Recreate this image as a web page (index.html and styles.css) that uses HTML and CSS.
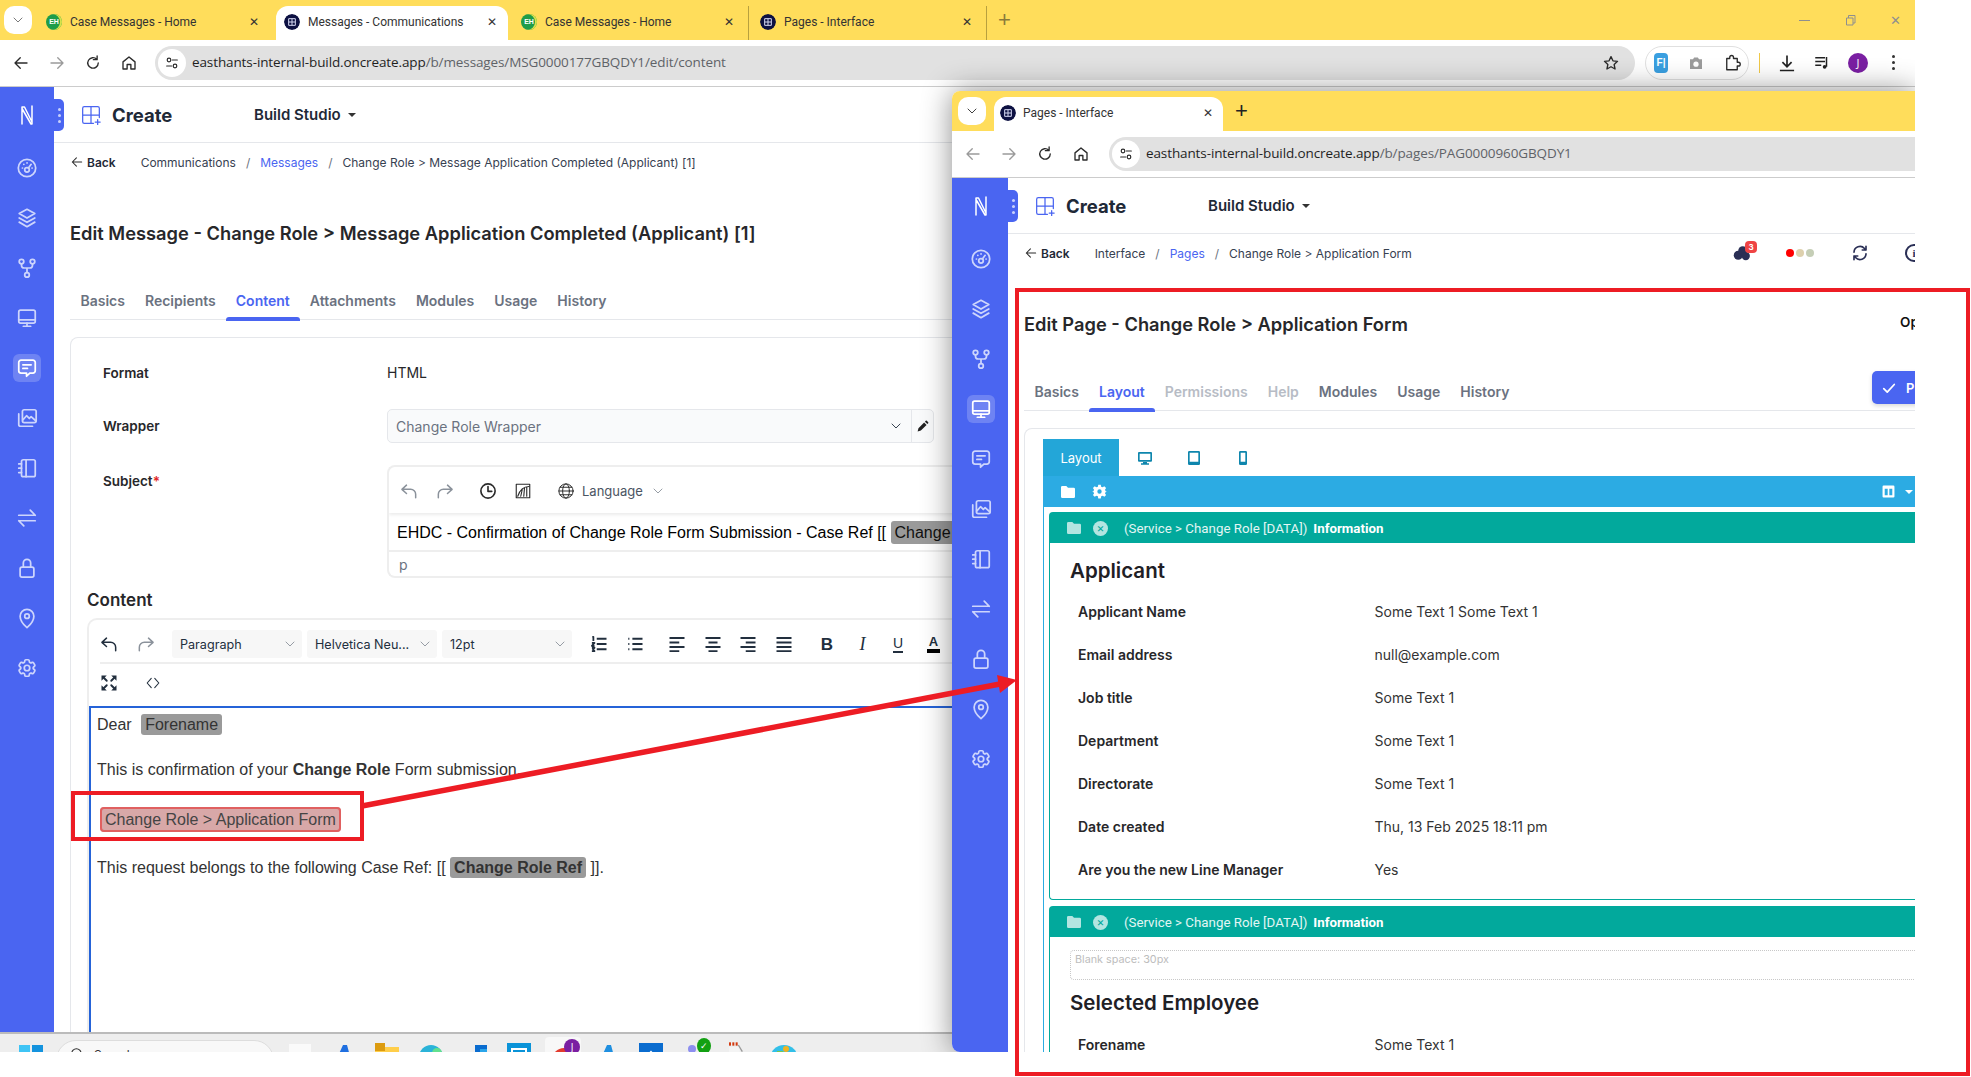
FILE: index.html
```html
<!DOCTYPE html>
<html lang="en">
<head>
<meta charset="utf-8">
<title>Messages - Communications</title>
<link rel="stylesheet" href="styles.css">
</head>
<body>
<svg class="defs" width="0" height="0" aria-hidden="true">
  <symbol id="i-gauge" viewBox="0 0 24 24"><circle cx="12" cy="12" r="9.500"/><circle cx="12" cy="14" r="2.500"/><path d="M13.500 12l3-4M7 12h.1M8.500 8h.1M12 6.500h.1M17.500 12h.1"/></symbol>
  <symbol id="i-layers" viewBox="0 0 24 24"><path d="M12 2.500l8.500 4.700L12 12 3.500 7.200z"/><path d="M3.500 12L12 16.700 20.500 12"/><path d="M3.500 16.500L12 21.500l8.500-5"/></symbol>
  <symbol id="i-fork" viewBox="0 0 24 24"><circle cx="6" cy="5" r="2.500"/><circle cx="18" cy="5" r="2.500"/><circle cx="12" cy="19.500" r="2.500"/><path d="M6 7.500V9a3 3 0 003 3h6a3 3 0 003-3V7.500M12 12v5"/></symbol>
  <symbol id="i-monitor" viewBox="0 0 24 24"><rect x="3" y="3.500" width="18" height="14" rx="2"/><path d="M3 14h18M12 17.500V21M8 21h8"/></symbol>
  <symbol id="i-chat" viewBox="0 0 24 24"><path d="M5.500 3.500h13a2.500 2.500 0 012.500 2.500v9a2.500 2.500 0 01-2.500 2.500H15L11.500 21v-3.500h-6A2.500 2.500 0 013 15V6a2.500 2.500 0 012.500-2.500z"/><path d="M7.500 8.500h9M7.500 12.500h5"/></symbol>
  <symbol id="i-images" viewBox="0 0 24 24"><rect x="7" y="3" width="15" height="14" rx="2"/><path d="M3 7.500V19a2 2 0 002 2h13M7.500 14l4-4.500 3 3 2-2 5 4.500"/></symbol>
  <symbol id="i-book" viewBox="0 0 24 24"><rect x="6" y="3" width="15" height="18.500" rx="2"/><path d="M11 3v18.500M3 7.500h3M3 12.200h3M3 17h3"/></symbol>
  <symbol id="i-swap" viewBox="0 0 24 24"><path d="M3 9h18M15.500 3.500L21 9M21 15H3M8.500 20.500L3 15"/></symbol>
  <symbol id="i-lock" viewBox="0 0 24 24"><rect x="4.500" y="11" width="15" height="11" rx="2"/><path d="M8 11V6.500a4 4 0 018 0V11"/></symbol>
  <symbol id="i-pin" viewBox="0 0 24 24"><path d="M12 22.500s7.500-6.500 7.500-12.500a7.500 7.500 0 10-15 0c0 6 7.500 12.500 7.500 12.500z"/><circle cx="12" cy="10" r="2.500"/></symbol>
  <symbol id="i-gear" viewBox="0 0 24 24"><path d="M9.594 3.940c.09-.542.56-.94 1.110-.94h2.593c.55 0 1.020.398 1.110.94l.213 1.281c.063.374.313.686.645.870.074.04.147.083.22.127.324.196.72.257 1.075.124l1.217-.456a1.125 1.125 0 011.370.49l1.296 2.247a1.125 1.125 0 01-.26 1.431l-1.003.827c-.293.24-.438.613-.431.992a6.759 6.759 0 010 .255c-.007.378.138.75.43.99l1.005.828c.424.35.534.954.26 1.430l-1.298 2.247a1.125 1.125 0 01-1.369.491l-1.217-.456c-.355-.133-.75-.072-1.076.124a6.570 6.570 0 01-.22.128c-.331.183-.581.495-.644.869l-.213 1.280c-.09.543-.56.941-1.110.941h-2.594c-.55 0-1.020-.398-1.110-.94l-.213-1.281c-.062-.374-.312-.686-.644-.870a6.520 6.520 0 01-.22-.127c-.325-.196-.72-.257-1.076-.124l-1.217.456a1.125 1.125 0 01-1.369-.49l-1.297-2.247a1.125 1.125 0 01.26-1.431l1.004-.827c.292-.24.437-.613.43-.992a6.932 6.932 0 010-.255c.007-.378-.138-.75-.43-.99l-1.004-.828a1.125 1.125 0 01-.26-1.430l1.297-2.247a1.125 1.125 0 011.370-.491l1.216.456c.356.133.751.072 1.076-.124.072-.044.146-.087.22-.128.332-.183.582-.495.644-.869l.214-1.281z"/><circle cx="12" cy="12" r="3"/></symbol>
  <symbol id="i-n" viewBox="0 0 24 24"><path d="M7 21V4h2.500L17 19V3M7 5.500L16 21h1v-2"/></symbol>
  <symbol id="i-create" viewBox="0 0 24 24"><path d="M15 22H4a2 2 0 01-2-2V4a2 2 0 012-2h16a2 2 0 012 2v11M12 2v20M2 12h20"/><path d="M20 17.500v6M17 20.500h6"/></symbol>
  <symbol id="i-back" viewBox="0 0 24 24"><path d="M20 12H4M11 5l-7 7 7 7"/></symbol>
  <symbol id="i-forward" viewBox="0 0 24 24"><path d="M4 12h16M13 5l7 7-7 7"/></symbol>
  <symbol id="i-reload" viewBox="0 0 24 24"><path d="M19 12a7 7 0 11-2-5M17.500 2.500V7.500H12.500"/></symbol>
  <symbol id="i-home" viewBox="0 0 24 24"><path d="M4 10.500L12 4l8 6.500V20h-5.500v-6h-5v6H4z"/></symbol>
  <symbol id="i-tune" viewBox="0 0 24 24"><circle cx="7.500" cy="7.500" r="2.700"/><path d="M12.500 7.500H20M4 16.500h7.500"/><circle cx="16.500" cy="16.500" r="2.700"/></symbol>
  <symbol id="i-star" viewBox="0 0 24 24"><path d="M12 3.500l2.600 5.600 6.100.7-4.500 4.200 1.200 6-5.400-3-5.400 3 1.200-6-4.500-4.200 6.100-.7z"/></symbol>
  <symbol id="i-puzzle" viewBox="0 0 24 24"><path d="M5 6h4V4.500a2.500 2.500 0 015 0V6h5v5h1.500a2.500 2.500 0 010 5H19v5H5z"/></symbol>
  <symbol id="i-undo" viewBox="0 0 24 24"><path d="M9 5L3.500 10 9 15M4 10h10a6 6 0 016 6v4"/></symbol>
  <symbol id="i-redo" viewBox="0 0 24 24"><path d="M15 5l5.500 5L15 15M20 10H10a6 6 0 00-6 6v4"/></symbol>
  <symbol id="i-chev" viewBox="0 0 24 24"><path d="M4 8l8 8 8-8"/></symbol>
  <symbol id="i-ol" viewBox="0 0 24 24"><path d="M9 5h13M9 12h13M9 19h13M3 3l1.500-.5V8M2.500 10.500h3.500l-3.500 4h3.500M2.500 17h3.500l-2 2 2 2.500h-3.500"/></symbol>
  <symbol id="i-ul" viewBox="0 0 24 24"><path d="M8.500 5H22M8.500 12H22M8.500 19H22M3 5h1.500M3 12h1.500M3 19h1.500"/></symbol>
  <symbol id="i-al" viewBox="0 0 24 24"><path d="M2 4h20M2 10h13M2 16h20M2 21.500h13"/></symbol>
  <symbol id="i-ac" viewBox="0 0 24 24"><path d="M2 4h20M6 10h12M2 16h20M6 21.500h12"/></symbol>
  <symbol id="i-ar" viewBox="0 0 24 24"><path d="M2 4h20M9 10h13M2 16h20M9 21.500h13"/></symbol>
  <symbol id="i-aj" viewBox="0 0 24 24"><path d="M2 4h20M2 10h20M2 16h20M2 21.500h20"/></symbol>
  <symbol id="i-expand" viewBox="0 0 24 24"><path d="M2 2h7L2 9zM22 2h-7l7 7zM2 22h7l-7-7zM22 22h-7l7-7z"/><path d="M5 5l4 4M19 5l-4 4M5 19l4-4M19 19l-4-4" stroke="#222f3e" stroke-width="2.500"/></symbol>
  <symbol id="i-code" viewBox="0 0 24 24"><path d="M9 4l-7 8 7 8M15 4l7 8-7 8"/></symbol>
  <symbol id="i-folder" viewBox="0 0 24 24"><path d="M1.500 5a2 2 0 012-2h6l2.500 2.500h8.500a2 2 0 012 2V19a2 2 0 01-2 2h-17a2 2 0 01-2-2z"/></symbol>
  <symbol id="i-oc" viewBox="0 0 24 24"><circle cx="12" cy="12" r="12" fill="#0d1142"/><path d="M7 7h10v10H7zM12 7v10M7 12h10" fill="none" stroke="#d5d8f2" stroke-width="1.500"/></symbol>
  <symbol id="i-search" viewBox="0 0 24 24"><circle cx="11" cy="11" r="8"/><path d="M17 17l5 5"/></symbol>
</svg>

<div class="stage">
  <div class="screen">

    <!-- back browser window -->
    <section class="window win-back">
      <div class="tabstrip">
        <span class="tab-down"><svg class="ic ic-12 st-grey"><use href="#i-chev"/></svg></span>
        <div class="tab tab-one"><span class="fav fav-eh">EH</span><span class="tab-t">Case Messages - Home</span><span class="tab-x">✕</span></div>
        <div class="tab tab-on"><svg class="fav"><use href="#i-oc"/></svg><span class="tab-t">Messages - Communications</span><span class="tab-x">✕</span></div>
        <div class="tab tab-three tab-sep"><span class="fav fav-eh">EH</span><span class="tab-t">Case Messages - Home</span><span class="tab-x">✕</span></div>
        <div class="tab tab-four tab-sep"><svg class="fav"><use href="#i-oc"/></svg><span class="tab-t">Pages - Interface</span><span class="tab-x">✕</span></div>
        <span class="tab-plus tab-plus-dim">+</span>
        <div class="winctl"><span class="wc-min"></span><svg class="wc-max" viewBox="0 0 12 12"><path d="M2.500 4h6.500v7H2.500zM4.500 4V1.500H11V9H9"/></svg><span class="wc-x">✕</span></div>
      </div>
      <div class="toolbar">
        <svg class="ic nav st-ink"><use href="#i-back"/></svg>
        <svg class="ic nav st-dim"><use href="#i-forward"/></svg>
        <svg class="ic nav st-ink"><use href="#i-reload"/></svg>
        <svg class="ic nav st-ink"><use href="#i-home"/></svg>
        <div class="addr">
          <span class="addr-site"><svg class="ic ic-16 st-ink"><use href="#i-tune"/></svg></span>
          <span class="url">easthants-internal-build.oncreate.app<span class="url-path">/b/messages/MSG0000177GBQDY1/edit/content</span></span>
          <svg class="ic ic-18 st-ink addr-star"><use href="#i-star"/></svg>
        </div>
        <div class="ext-pill">
          <span class="ext-f">F|</span>
          <svg class="ext-cam" viewBox="0 0 24 24"><path d="M4 7h4l1.500-2.500h5L16 7h4v13H4z"/><circle cx="12" cy="13.500" r="3.500" class="ext-cam-eye"/></svg>
          <svg class="ic ic-18 st-ink"><use href="#i-puzzle"/></svg>
        </div>
        <span class="tb-sep"></span>
        <svg class="tb-icon" viewBox="0 0 24 24"><path d="M12 3v13M6.500 11l5.500 5.500 5.500-5.500M3.500 21h17"/></svg>
        <svg class="tb-icon tb-media" viewBox="0 0 24 24"><path d="M3 5h13M3 10h13M3 15h8M18 4v13"/><circle cx="15.500" cy="17" r="2.500" class="tb-fill"/></svg>
        <span class="avatar">J</span>
        <span class="kebab"><i></i><i></i><i></i></span>
      </div>
      <div class="app">
        <aside class="rail">
          <div class="rail-logo"><svg class="ic ic-24 st-white st-thin"><use href="#i-n"/></svg></div>
          <span class="rail-grip"><i></i><i></i><i></i></span>
          <span class="rail-item"><svg class="ic st-soft"><use href="#i-gauge"/></svg></span>
          <span class="rail-item"><svg class="ic st-soft"><use href="#i-layers"/></svg></span>
          <span class="rail-item"><svg class="ic st-soft"><use href="#i-fork"/></svg></span>
          <span class="rail-item"><svg class="ic st-soft"><use href="#i-monitor"/></svg></span>
          <span class="rail-item rail-on"><svg class="ic st-white"><use href="#i-chat"/></svg></span>
          <span class="rail-item"><svg class="ic st-soft"><use href="#i-images"/></svg></span>
          <span class="rail-item"><svg class="ic st-soft"><use href="#i-book"/></svg></span>
          <span class="rail-item"><svg class="ic st-soft"><use href="#i-swap"/></svg></span>
          <span class="rail-item"><svg class="ic st-soft"><use href="#i-lock"/></svg></span>
          <span class="rail-item"><svg class="ic st-soft"><use href="#i-pin"/></svg></span>
          <span class="rail-item"><svg class="ic st-soft"><use href="#i-gear"/></svg></span>
        </aside>
        <main class="main">
          <header class="appbar">
            <div class="brand"><svg class="ic brand-ic st-blue"><use href="#i-create"/></svg><span class="brand-t">Create</span></div>
            <span class="studio">Build Studio</span><span class="caret"></span>
          </header>
          <nav class="crumbs">
            <svg class="ic ic-14 st-ink crumb-arrow"><use href="#i-back"/></svg><span class="back">Back</span>
            <span class="crumb crumb-first">Communications</span><span class="slash">/</span>
            <span class="crumb crumb-link">Messages</span><span class="slash">/</span>
            <span class="crumb">Change Role &gt; Message Application Completed (Applicant) [1]</span>
          </nav>
          <h1 class="page-title">Edit Message - Change Role &gt; Message Application Completed (Applicant) [1]</h1>
          <div class="tabs">
            <span class="tabx">Basics</span><span class="tabx">Recipients</span><span class="tabx tabx-on">Content</span><span class="tabx">Attachments</span><span class="tabx">Modules</span><span class="tabx">Usage</span><span class="tabx">History</span>
          </div>
          <div class="card card-form">
            <div class="form-grid">
              <div class="lbl">Format</div><div class="val">HTML</div>
              <div class="lbl">Wrapper</div>
              <div class="select">
                <span class="select-t">Change Role Wrapper</span>
                <svg class="ic ic-12 st-ink2"><use href="#i-chev"/></svg>
                <span class="select-edit"><svg class="pen" viewBox="0 0 24 24"><path d="M3 21l1.500-6L15 4.500l4.500 4.500L9 19.500zM16.500 3l1.500-1.500a1.500 1.500 0 012 0L22.500 4a1.500 1.500 0 010 2L21 7.500z"/></svg></span>
              </div>
              <div class="lbl lbl-top">Subject<span class="req">*</span></div>
              <div class="rte-small">
                <div class="rs-bar">
                  <svg class="ic ic-20 st-mute"><use href="#i-undo"/></svg>
                  <svg class="ic ic-20 st-mute"><use href="#i-redo"/></svg>
                  <svg class="ic ic-20 st-ink rs-clock" viewBox="0 0 24 24"><circle cx="12" cy="12" r="9.500"/><path d="M12 6v6.500h5"/></svg>
                  <svg class="ic ic-20 st-ink rs-chart" viewBox="0 0 24 24"><rect x="3" y="3" width="18" height="18"/><path d="M5 19C8 10 13 6 20 6M9 19l2-9M13 19l1-11M17 19V7"/></svg>
                  <svg class="ic ic-20 st-ink rs-globe" viewBox="0 0 24 24"><circle cx="12" cy="12" r="9.500"/><ellipse cx="12" cy="12" rx="4.500" ry="9.500"/><path d="M2.500 12h19M4 7h16M4 17h16"/></svg>
                  <span class="rs-lang">Language</span>
                  <svg class="ic ic-12 st-mute"><use href="#i-chev"/></svg>
                </div>
                <div class="rs-text">EHDC - Confirmation of Change Role Form Submission - Case Ref [[ <span class="chip chip-sub">Change Role Ref</span> ]]</div>
                <div class="rs-path">p</div>
              </div>
            </div>
            <h2 class="sec-title">Content</h2>
            <div class="rte">
              <div class="rte-bar">
                <button class="tbtn tbtn-undo"><svg class="ic ic-20 st-ink2"><use href="#i-undo"/></svg></button>
                <button class="tbtn"><svg class="ic ic-20 st-mute"><use href="#i-redo"/></svg></button>
                <span class="sel sel-first">Paragraph<svg class="ic ic-12 st-mute"><use href="#i-chev"/></svg></span>
                <span class="sel">Helvetica Neu...<svg class="ic ic-12 st-mute"><use href="#i-chev"/></svg></span>
                <span class="sel">12pt<svg class="ic ic-12 st-mute"><use href="#i-chev"/></svg></span>
                <button class="tbtn tg-a"><svg class="ic ic-18 st-ink2 st-bold"><use href="#i-ol"/></svg></button>
                <button class="tbtn"><svg class="ic ic-18 st-ink2 st-bold"><use href="#i-ul"/></svg></button>
                <button class="tbtn tg-b"><svg class="ic ic-18 st-ink2 st-bold"><use href="#i-al"/></svg></button>
                <button class="tbtn"><svg class="ic ic-18 st-ink2 st-bold"><use href="#i-ac"/></svg></button>
                <button class="tbtn"><svg class="ic ic-18 st-ink2 st-bold"><use href="#i-ar"/></svg></button>
                <button class="tbtn"><svg class="ic ic-18 st-ink2 st-bold"><use href="#i-aj"/></svg></button>
                <button class="tbtn tbtn-t tg-c"><b>B</b></button>
                <button class="tbtn tbtn-t"><i class="ital">I</i></button>
                <button class="tbtn tbtn-t"><span class="undl">U</span></button>
                <button class="tbtn tbtn-t"><span class="colr">A</span></button>
              </div>
              <div class="rte-bar2">
                <button class="tbtn tbtn-undo"><svg class="ic ic-18 fl-ink"><use href="#i-expand"/></svg></button>
                <button class="tbtn tbtn-code"><svg class="ic ic-14 st-ink2"><use href="#i-code"/></svg></button>
              </div>
              <div class="rte-body">
                <p>Dear <span class="chip chip-first">Forename</span></p>
                <p>This is confirmation of your <b>Change Role</b> Form submission.</p>
                <p class="p-form"><span class="chip chip-form">Change Role &gt; Application Form</span></p>
                <p>This request belongs to the following Case Ref: [[ <span class="chip"><b>Change Role Ref</b></span> ]].</p>
              </div>
            </div>
          </div>
        </main>
      </div>
    </section>

    <!-- Windows taskbar -->
    <footer class="taskbar">
      <svg class="tk tk-win" viewBox="0 0 24 24"><rect x="0" y="0" width="11" height="24" fill="#3fc4f5"/><rect x="13" y="0" width="11" height="24" fill="#1493de"/></svg>
      <div class="tk-search"><svg class="ic ic-14 st-ink"><use href="#i-search"/></svg><span class="tk-search-t">Search</span></div>
      <span class="tk-view"></span>
      <svg class="tk" viewBox="0 0 24 24"><path d="M2 24L12 2l4 0 6 22z" fill="#1f6fe0"/><circle cx="20" cy="20" r="6" fill="#b06ee8"/></svg>
      <svg class="tk" viewBox="0 0 24 24"><rect x="0" y="4" width="24" height="20" fill="#ffce4a"/><rect x="0" y="0" width="10" height="8" fill="#dc9b10"/></svg>
      <svg class="tk" viewBox="0 0 24 24"><circle cx="12" cy="14" r="12" fill="#2bb3d8"/><circle cx="18" cy="10" r="5" fill="#63e08f"/></svg>
      <svg class="tk" viewBox="0 0 24 24"><rect x="12" y="2" width="12" height="22" fill="#0a6ccf"/><rect x="0" y="12" width="14" height="12" fill="#0a4fa8"/><rect x="17" y="6" width="7" height="18" fill="#2aa5ea"/></svg>
      <svg class="tk tk-print" viewBox="0 0 24 24"><rect x="0" y="0" width="24" height="24" fill="#0a93d8"/><rect x="5" y="6" width="14" height="7" fill="none" stroke="#fff" stroke-width="2"/><rect x="3" y="13" width="18" height="4" fill="#fff"/></svg>
      <span class="tk-active"><svg class="tk-chrome" viewBox="0 0 24 24"><circle cx="12" cy="16" r="12" fill="#e33b2e"/><circle cx="12" cy="16" r="5" fill="#4a8ef0"/></svg><span class="tk-j">J</span></span>
      <svg class="tk" viewBox="0 0 24 24"><path d="M2 24L12 2l4 0 6 22z" fill="#1f8fe0"/><circle cx="20" cy="20" r="6" fill="#b06ee8"/></svg>
      <svg class="tk tk-vs" viewBox="0 0 24 24"><rect x="0" y="0" width="24" height="24" fill="#0a6ccf"/><path d="M9 12l3-3 3 3-3 3z" fill="none" stroke="#fff" stroke-width="2"/></svg>
      <span class="tk-teams"><i class="tk-dot"></i><i class="tk-ok">✓</i></span>
      <svg class="tk tk-snip" viewBox="0 0 24 24"><rect x="0" y="2" width="3" height="5" fill="#d33a10"/><rect x="5" y="2" width="3" height="5" fill="#d33a10"/><rect x="10" y="2" width="3" height="5" fill="#d33a10"/><rect x="0" y="9" width="16" height="15" fill="#f4f4f4"/><path d="M14 6l6 10" stroke="#999" stroke-width="2"/></svg>
      <svg class="tk tk-last" viewBox="0 0 24 24"><circle cx="12" cy="16" r="14" fill="#32bfe8"/><circle cx="14" cy="6" r="3" fill="#f0b320"/><rect x="5" y="8" width="6" height="14" fill="#78c850"/></svg>
    </footer>

    <!-- front browser window -->
    <section class="window win-front">
      <div class="tabstrip tabstrip-front">
        <span class="tab-down"><svg class="ic ic-12 st-ink"><use href="#i-chev"/></svg></span>
        <div class="tab tab-w2 tab-on"><svg class="fav"><use href="#i-oc"/></svg><span class="tab-t">Pages - Interface</span><span class="tab-x">✕</span></div>
        <span class="tab-plus">+</span>
      </div>
      <div class="toolbar">
        <svg class="ic nav st-dim"><use href="#i-back"/></svg>
        <svg class="ic nav st-dim"><use href="#i-forward"/></svg>
        <svg class="ic nav st-ink"><use href="#i-reload"/></svg>
        <svg class="ic nav st-ink"><use href="#i-home"/></svg>
        <div class="addr addr-front">
          <span class="addr-site"><svg class="ic ic-16 st-ink"><use href="#i-tune"/></svg></span>
          <span class="url">easthants-internal-build.oncreate.app<span class="url-path">/b/pages/PAG0000960GBQDY1</span></span>
        </div>
      </div>
      <div class="app">
        <aside class="rail rail-wide">
          <div class="rail-logo"><svg class="ic ic-24 st-white st-thin"><use href="#i-n"/></svg></div>
          <span class="rail-grip"><i></i><i></i><i></i></span>
          <span class="rail-item"><svg class="ic st-soft"><use href="#i-gauge"/></svg></span>
          <span class="rail-item"><svg class="ic st-soft"><use href="#i-layers"/></svg></span>
          <span class="rail-item"><svg class="ic st-soft"><use href="#i-fork"/></svg></span>
          <span class="rail-item rail-on"><svg class="ic st-white"><use href="#i-monitor"/></svg></span>
          <span class="rail-item"><svg class="ic st-soft"><use href="#i-chat"/></svg></span>
          <span class="rail-item"><svg class="ic st-soft"><use href="#i-images"/></svg></span>
          <span class="rail-item"><svg class="ic st-soft"><use href="#i-book"/></svg></span>
          <span class="rail-item"><svg class="ic st-soft"><use href="#i-swap"/></svg></span>
          <span class="rail-item"><svg class="ic st-soft"><use href="#i-lock"/></svg></span>
          <span class="rail-item"><svg class="ic st-soft"><use href="#i-pin"/></svg></span>
          <span class="rail-item"><svg class="ic st-soft"><use href="#i-gear"/></svg></span>
        </aside>
        <main class="main">
          <header class="appbar">
            <div class="brand"><svg class="ic brand-ic st-blue"><use href="#i-create"/></svg><span class="brand-t">Create</span></div>
            <span class="studio">Build Studio</span><span class="caret"></span>
          </header>
          <nav class="crumbs">
            <svg class="ic ic-14 st-ink crumb-arrow"><use href="#i-back"/></svg><span class="back">Back</span>
            <span class="crumb crumb-first">Interface</span><span class="slash">/</span>
            <span class="crumb crumb-link">Pages</span><span class="slash">/</span>
            <span class="crumb">Change Role &gt; Application Form</span>
            <div class="crumb-tools">
              <span class="cloud"><svg class="cloud-ic" viewBox="0 0 24 24"><circle cx="7" cy="15" r="6"/><circle cx="13" cy="9" r="6"/><circle cx="17" cy="16" r="5.500"/></svg><span class="cloud-n">3</span></span>
              <span class="dots"><i class="d-r"></i><i class="d-y"></i><i class="d-g"></i></span>
              <svg class="ic ic-18 st-navy" viewBox="0 0 24 24"><path d="M4 11a8 8 0 0114-5l2 2M20 3v5h-5M20 13a8 8 0 01-14 5l-2-2M4 21v-5h5"/></svg>
              <span class="info">i</span>
            </div>
          </nav>
          <div class="title-row">
            <h1 class="page-title">Edit Page - Change Role &gt; Application Form</h1>
            <span class="open-t">Open</span>
          </div>
          <div class="tabs tabs-action">
            <span class="tabx">Basics</span><span class="tabx tabx-on">Layout</span><span class="tabx tabx-off">Permissions</span><span class="tabx tabx-off">Help</span><span class="tabx">Modules</span><span class="tabx">Usage</span><span class="tabx">History</span>
            <span class="publish"><svg class="ic ic-14 st-white2" viewBox="0 0 24 24"><path d="M3 13l6 6L21 6"/></svg>Publish</span>
          </div>
          <div class="card card-layout">
            <div class="lay-tabs">
              <span class="lay-on">Layout</span>
              <svg class="lay-ic" viewBox="0 0 24 24"><path d="M3 3h18a1.500 1.500 0 011.500 1.500V16a1.500 1.500 0 01-1.500 1.500H3A1.500 1.500 0 011.500 16V4.500A1.500 1.500 0 013 3zM4 5.500v9.500h16V5.500zM9 18h6v2h3v2H6v-2h3z" fill-rule="evenodd"/></svg>
              <svg class="lay-ic" viewBox="0 0 24 24"><path d="M5 1.500h14A2 2 0 0121 3.500v17a2 2 0 01-2 2H5a2 2 0 01-2-2v-17a2 2 0 012-2zM5.500 4v13.500h13V4z" fill-rule="evenodd"/></svg>
              <svg class="lay-ic" viewBox="0 0 24 24"><path d="M8 1.500h8A2 2 0 0118 3.500v17a2 2 0 01-2 2H8a2 2 0 01-2-2v-17a2 2 0 012-2zM8.500 4v13.500h7V4z" fill-rule="evenodd"/></svg>
            </div>
            <div class="lay-bar">
              <svg class="ic ic-16 fl-white"><use href="#i-folder"/></svg>
              <svg class="ic ic-16 fl-white lay-gear" viewBox="0 0 24 24"><path d="M10 1h4l.6 3.200 2.400 1 2.700-1.800 2.800 2.800L20.800 9l1 2.400L25 12l-3.200.6-1 2.400 1.800 2.700-2.800 2.800-2.700-1.800-2.400 1L14 23h-4l-.6-3.300-2.400-1-2.700 1.800-2.800-2.800L3.300 15l-1-2.400L-1 12l3.300-.6 1-2.400-1.800-2.700 2.800-2.800L7 5.300l2.400-1zM12 8.500a3.500 3.500 0 100 7 3.500 3.500 0 000-7z" fill-rule="evenodd"/></svg>
              <span class="lay-right"><svg class="lay-cols" viewBox="0 0 24 24"><path d="M3 1h18a2 2 0 012 2v18a2 2 0 01-2 2H3a2 2 0 01-2-2V3a2 2 0 012-2zM5 7v12h5.500V7zM13.500 7v12H19V7z" fill-rule="evenodd"/></svg><span class="caret caret-white"></span></span>
            </div>
            <div class="lay-body">
              <section class="panel">
                <div class="panel-head"><svg class="ic ic-16 fl-mint"><use href="#i-folder"/></svg><span class="panel-x">×</span><span class="panel-src">(Service &gt; Change Role [DATA])</span><b class="panel-name">Information</b></div>
                <div class="panel-body">
                  <h3 class="panel-h">Applicant</h3>
                  <dl class="rows">
                    <dt>Applicant Name</dt><dd>Some Text 1 Some Text 1</dd>
                    <dt>Email address</dt><dd>null@example.com</dd>
                    <dt>Job title</dt><dd>Some Text 1</dd>
                    <dt>Department</dt><dd>Some Text 1</dd>
                    <dt>Directorate</dt><dd>Some Text 1</dd>
                    <dt>Date created</dt><dd>Thu, 13 Feb 2025 18:11 pm</dd>
                    <dt>Are you the new Line Manager</dt><dd>Yes</dd>
                  </dl>
                </div>
              </section>
              <section class="panel">
                <div class="panel-head"><svg class="ic ic-16 fl-mint"><use href="#i-folder"/></svg><span class="panel-x">×</span><span class="panel-src">(Service &gt; Change Role [DATA])</span><b class="panel-name">Information</b></div>
                <div class="panel-body">
                  <div class="blank">Blank space: 30px</div>
                  <h3 class="panel-h panel-h2">Selected Employee</h3>
                  <dl class="rows">
                    <dt>Forename</dt><dd>Some Text 1</dd>
                  </dl>
                </div>
              </section>
            </div>
          </div>
        </main>
      </div>
    </section>
  </div>

  <!-- annotations drawn over the screenshot -->
  <div class="note-box note-small"></div>
  <div class="note-box note-large"></div>
  <svg class="note-arrow" viewBox="0 0 1971 1077" aria-hidden="true">
    <path class="note-line" d="M362 806L1000 684"/>
    <path class="note-head" d="M997 675L1017 680 1000 693z"/>
  </svg>
</div>
</body>
</html>
```
FILE: styles.css
```css
* { box-sizing: border-box; }
html, body { margin: 0; padding: 0; background: #fff; }
body { font-family: Inter, "Liberation Sans", sans-serif; color: #1f2937; }
.defs { position: absolute; }
h1, h2, h3, p, dl, dd { margin: 0; }
button { border: 0; background: none; padding: 0; font: inherit; color: inherit; }

/* stage and windows: free canvas */
.stage { position: relative; width: 1971px; height: 1077px; overflow: hidden; background: #fff; }
.screen { position: relative; width: 1915px; height: 1052px; overflow: hidden; background: #fff; }
.window { position: absolute; overflow: hidden; background: #fff; display: flex; flex-direction: column; }
.win-back { left: 0; top: 0; width: 1915px; height: 1032px; }
.win-front { left: 952px; top: 91px; width: 963px; height: 961px; border-top-left-radius: 8px; border-bottom-left-radius: 8px; box-shadow: 0 0 30px rgba(0, 0, 0, .45); z-index: 2; }

/* icons */
.ic { display: block; flex: none; width: 24px; height: 24px; fill: none; stroke-width: 1.8; stroke-linecap: round; stroke-linejoin: round; }
.ic-12 { width: 12px; height: 12px; }
.ic-14 { width: 14px; height: 14px; }
.ic-16 { width: 16px; height: 16px; }
.ic-18 { width: 18px; height: 18px; }
.ic-20 { width: 20px; height: 20px; }
.ic-24 { width: 24px; height: 24px; }
.st-ink { stroke: #2b2b2b; }
.st-ink2 { stroke: #222f3e; }
.st-bold { stroke-width: 2.400; stroke-linecap: butt; }
.st-dim { stroke: #9a9a9a; }
.st-grey { stroke: #6b6b6b; }
.st-mute { stroke: #8b929b; }
.st-white { stroke: #fff; }
.st-thin { stroke-width: 1.500; }
.st-white2 { stroke: #fff; stroke-width: 3; }
.st-soft { stroke: #cdd5fc; }
.st-blue { stroke: #4a65f1; }
.st-navy { stroke: #2a2f55; stroke-width: 2.200; }
.fl-ink { fill: #222f3e; stroke: none; }
.fl-white { fill: #fff; stroke: none; }
.fl-mint { fill: #b3e5e1; stroke: none; }

/* browser tab strip */
.tabstrip { height: 40px; flex: none; background: #ffdd5b; display: flex; align-items: flex-end; position: relative; padding-left: 4px; font-family: Roboto, "Liberation Sans", sans-serif; font-size: 12px; color: #333; }
.tabstrip-front { padding-left: 6px; }
.tab-down { width: 28px; height: 28px; margin-bottom: 6px; background: #fff; border-radius: 10px; display: flex; align-items: center; justify-content: center; flex: none; }
.tab { height: 34px; display: flex; align-items: center; flex: none; padding: 0 8px 3px 8px; position: relative; }
.tab-one { width: 238px; margin-left: 6px; padding-right: 14px; }
.tab-on { width: 232px; background: #fff; border-radius: 12px 12px 0 0; }
.tab-three { width: 241px; padding-left: 13px; padding-right: 11px; }
.tab-four { width: 238px; padding-left: 11px; padding-right: 11px; }
.tab-w2 { width: 229px; margin-left: 8px; padding-left: 6px; padding-right: 7px; }
.tab-sep { border-right: 1px solid #b8a03e; }
.fav { flex: none; display: block; width: 16px; height: 16px; border-radius: 50%; margin-right: 8px; }
.tab-w2 .fav { margin-right: 7px; }
.fav-eh { background: #1e9c4a; color: #fff; font: bold 7px/16px "Liberation Sans", sans-serif; text-align: center; box-shadow: inset -2px 0 #d8e24a; }
.tab-t { flex: 1; min-width: 0; white-space: nowrap; overflow: hidden; }
.tab-x { flex: none; font-size: 12px; color: #333; width: 16px; text-align: center; }
.tab-plus { font: 400 22px/34px "Liberation Sans", sans-serif; color: #222; margin-left: 12px; padding-bottom: 3px; height: 37px; }
.tab-plus-dim { color: #8a7a3a; margin-left: 11px; }
.winctl { position: absolute; right: 14px; top: 0; height: 40px; display: flex; align-items: center; gap: 34px; color: #8f8f8f; }
.wc-min { width: 11px; height: 1px; background: #8f8f8f; }
.wc-max { width: 12px; height: 12px; fill: none; stroke: #8f8f8f; }
.wc-x { font-size: 13px; }

/* browser toolbar */
.toolbar { height: 47px; flex: none; background: #fff; border-bottom: 1px solid #ccc; display: flex; align-items: center; padding: 0 10px 1px 12px; }
.nav { width: 18px; height: 18px; margin-right: 18px; }
.addr { flex: none; width: 1480px; height: 34px; border-radius: 17px; background: #e1e1e1; display: flex; align-items: center; padding-left: 3px; position: relative; }
.win-back .addr { margin-left: -1px; }
.addr-site { width: 28px; height: 28px; border-radius: 50%; background: #fff; display: flex; align-items: center; justify-content: center; flex: none; }
.url { margin: 1px 0 0 6px; font: 13.500px/1 "Open Sans", "Liberation Sans", sans-serif; color: #1f1f1f; white-space: nowrap; letter-spacing: -.11px; }
.url-path { color: #5f6368; }
.addr-star { position: absolute; right: 15px; top: 8px; }
.addr-front { width: 830px; margin-left: 1px; }
.ext-pill { margin-left: 10px; width: 104px; height: 34px; border: 1px solid #e0e0e0; border-radius: 17px; display: flex; align-items: center; justify-content: space-between; padding: 0 7px 0 8px; flex: none; }
.ext-f { width: 14px; height: 20px; background: #3a9fe0; color: #fff; font: bold 10px/20px "Liberation Sans", sans-serif; text-align: center; border-radius: 4px; }
.ext-cam { width: 18px; height: 18px; fill: #9c9c9c; }
.ext-cam-eye { fill: #fff; }
.tb-sep { width: 1px; height: 20px; background: #f0c848; margin: 0 17px 0 10px; flex: none; }
.tb-icon { width: 20px; height: 20px; fill: none; stroke: #222; stroke-width: 2; flex: none; margin-right: 16px; }
.tb-media { width: 18px; height: 18px; margin-right: 17px; }
.tb-fill { fill: #222; stroke: none; }
.avatar { width: 20px; height: 20px; border-radius: 50%; background: #7a1fa2; color: #fff; font: 11px/20px "Open Sans", sans-serif; text-align: center; flex: none; }
.kebab { display: flex; flex-direction: column; gap: 3px; margin-left: 24px; flex: none; }
.kebab i { width: 3px; height: 3px; background: #333; border-radius: 50%; display: block; }

/* app shell */
.app { flex: 1; min-height: 0; display: flex; }
.rail { width: 54px; flex: none; background: #4a65f1; display: flex; flex-direction: column; align-items: center; position: relative; z-index: 1; }
.rail-wide { width: 56px; padding-left: 2px; }
.rail-logo { height: 56px; flex: none; display: flex; align-items: center; justify-content: center; }
.rail-grip { position: absolute; left: 100%; top: 12px; width: 10px; height: 32px; background: #4a65f1; border-radius: 0 5px 5px 0; display: flex; flex-direction: column; align-items: center; justify-content: center; gap: 3px; }
.rail-grip i { width: 3px; height: 3px; border-radius: 50%; background: #c9d1fb; display: block; }
.rail-item { width: 28px; height: 28px; margin-top: 22px; display: flex; align-items: center; justify-content: center; border-radius: 6px; flex: none; }
.rail-item:nth-child(3) { margin-top: 11px; }
.rail-item .ic { width: 22px; height: 22px; stroke-width: 1.900; }
.rail-on { background: rgba(255, 255, 255, .2); }
.main { flex: 1; min-width: 0; display: flex; flex-direction: column; position: relative; }

/* app bar */
.appbar { height: 56px; flex: none; border-bottom: 1px solid #e5e7eb; display: flex; align-items: center; padding-left: 27px; }
.brand { width: 173px; display: flex; align-items: center; gap: 11px; flex: none; }
.brand-ic { width: 20px; height: 20px; stroke-width: 1.500; }
.brand-t { font-size: 18.500px; font-weight: 700; color: #1f2937; }
.studio { font-size: 15px; font-weight: 600; color: #1f2937; }
.caret { width: 0; height: 0; border: 4px solid transparent; border-top-color: #333; border-bottom: 0; margin-left: 7px; }
.caret-white { border-top-color: #fff; margin-left: 10px; }

/* breadcrumb */
.crumbs { height: 40px; flex: none; display: flex; align-items: center; padding: 0 0 2px 16px; font-size: 12px; color: #374151; }
.crumb-arrow { margin-right: 3px; }
.back { font-weight: 600; color: #1f2937; }
.crumb-first { margin-left: 25px; }
.crumb-link { color: #4a65f1; }
.slash { color: #6b7280; margin: 0 10px; }
.crumb-tools { position: absolute; right: 0; display: flex; align-items: center; }
.cloud { position: relative; width: 24px; height: 18px; margin-right: 29px; }
.cloud-ic { width: 18px; height: 18px; fill: #2a2f55; display: block; }
.cloud-n { position: absolute; left: 12px; top: -3px; width: 12px; height: 12px; border-radius: 4px; background: #ef4444; color: #fff; font-size: 8px; line-height: 12px; text-align: center; font-weight: 700; }
.dots { display: flex; gap: 2px; margin-right: 37px; }
.dots i { width: 8px; height: 8px; border-radius: 50%; display: block; }
.d-r { background: #f00; }
.d-y { background: #ddd0ad; }
.d-g { background: #c5ceb6; }
.info { width: 18px; height: 18px; margin: 0 -8px 0 36px; border: 2px solid #2a2f55; border-radius: 50%; font: 700 11px/14px "Liberation Serif", serif; text-align: center; color: #2a2f55; }

/* headings and tabs */
.page-title { margin: 36px 0 0 16px; font-size: 18.300px; line-height: 28px; font-weight: 600; color: #27272a; white-space: nowrap; }
.title-row { display: flex; position: relative; }
.open-t { position: absolute; left: 892px; top: 40px; font-size: 13.500px; font-weight: 600; color: #111; }
.tabs { margin: 33px 0 0 16px; height: 40px; flex: none; border-bottom: 1px solid #e5e7eb; display: flex; align-items: center; position: relative; }
.tabx { height: 40px; padding: 2px 10px 0; display: flex; align-items: center; font-size: 14px; font-weight: 600; color: #6b7280; position: relative; }
.tabx:first-child { margin-left: 0.500px; }
.tabx-on { color: #4a65f1; }
.tabx-on::after { content: ""; position: absolute; left: 0; right: 0; bottom: -1px; height: 4px; background: #4a65f1; border-radius: 3px 3px 0 0; }
.tabx-off { color: #b7bcc5; }
.publish { position: absolute; left: 848px; top: 0; width: 110px; height: 33px; border-radius: 5px; background: #4a65f1; color: #fff; font-size: 13px; font-weight: 600; display: flex; align-items: center; gap: 10px; padding-left: 10px; box-shadow: 0 2px 4px rgba(0, 0, 0, .15); }

/* cards */
.card { margin: 17px -30px 0 16px; border: 1px solid #e5e7eb; border-bottom: 0; border-radius: 8px 0 0 0; flex: 1; min-height: 0; }
.card-form { padding: 25px 0 0 32px; }
.card-layout { padding: 10px 0 0 18px; }

/* message form */
.form-grid { display: grid; grid-template-columns: 284px 547px; row-gap: 26px; align-items: center; }
.lbl { font-size: 13.500px; font-weight: 600; color: #27272a; line-height: 20px; }
.lbl-top { align-self: start; padding-top: 6px; margin-top: -4px; }
.val { font-size: 14px; line-height: 20px; color: #27272a; }
.req { color: #e02424; }
.select { height: 34px; border: 1px solid #e5e7eb; border-radius: 5px; background: #f9fafb; display: flex; align-items: center; font-size: 14px; color: #6b7280; padding-left: 8px; }
.select-t { flex: 1; }
.select-edit { width: 22px; height: 100%; margin-left: 9px; border-left: 1px solid #e5e7eb; display: flex; align-items: center; justify-content: center; }
.pen { width: 13px; height: 13px; fill: #222; }
.rte-small { width: 800px; height: 113px; margin-top: -4px; border: 2px solid #eee; border-right: 0; border-radius: 8px 0 0 8px; display: flex; flex-direction: column; overflow: hidden; }
.rs-bar { height: 46px; flex: none; display: flex; align-items: center; padding: 1px 0 0 10px; box-shadow: 0 2px 3px rgba(0, 0, 0, .08); gap: 16px; }
.rs-clock { margin-left: 8px; width: 18px; height: 18px; stroke-width: 2.200; }
.rs-chart { width: 18px; height: 18px; margin-left: 1px; stroke-width: 1.500; }
.rs-globe { margin-left: 9px; width: 18px; height: 18px; stroke-width: 1.300; }
.rs-lang { font-size: 13px; color: #4b5563; margin-left: -9px; margin-right: -7px; }
.rs-text { height: 39px; flex: none; font: 16px/39px "Liberation Sans", sans-serif; color: #000; padding-left: 8px; border-bottom: 2px solid #eee; white-space: nowrap; }
.rs-path { font-size: 14px; color: #6b7280; padding: 4px 0 0 10px; }
.chip { background: #9a9a9a; border-radius: 3px; padding: 2px 4px; color: #333; }
.chip-sub { padding: 3px 4px; color: #111; }
.chip-first { margin-left: 5px; }
.sec-title { margin: 10px 0 0 -16px; font-size: 17px; line-height: 24px; font-weight: 600; color: #27272a; }

/* content editor */
.rte { margin: 6px 0 0 -16px; width: 1000px; border: 2px solid #eee; border-right: 0; border-radius: 10px 0 0 0; }
.rte-bar { height: 44px; margin-left: 11px; display: flex; align-items: center; border-bottom: 2px solid #eee; padding-top: 6px; }
.tbtn { width: 24px; height: 24px; flex: none; display: flex; align-items: center; justify-content: center; margin-right: 13px; color: #222f3e; }
.tbtn-undo { margin-left: -3px; }
.sel { width: 130px; height: 28px; margin-right: 5px; flex: none; border-radius: 3px; background: #f7f7f7; display: flex; align-items: center; justify-content: space-between; padding: 0 6px 0 8px; font-size: 12.600px; color: #222f3e; }
.sel-first { margin-left: 1px; }
.rte-bar .tbtn:nth-of-type(n+3) { margin-right: 11.500px; }
.rte-bar .tg-a { margin-left: 10px; }
.rte-bar .tg-b { margin-left: 7px; }
.rte-bar .tg-c { margin-left: 8px; }
.tbtn-t { font: 700 17px/1 "Liberation Sans", sans-serif; }
.tbtn-t b { font-weight: 700; }
.ital { font: italic 400 18px/1 "Liberation Serif", serif; }
.undl { font: 400 14px/1 "Liberation Sans", sans-serif; border-bottom: 2px solid #222f3e; padding-bottom: 1px; }
.colr { font: 700 13px/1 "Liberation Sans", sans-serif; border-bottom: 4px solid #000; padding: 0 2px 1px; }
.rte-bar2 { height: 42px; display: flex; align-items: center; padding: 0 0 4px 11px; }
.tbtn-code { margin-left: 7px; }
.rte-body { border: 2px solid #2563d8; border-right: 0; border-bottom: 0; padding: 5px 0 0 6px; height: 400px; font: 16px/24px "Liberation Sans", sans-serif; color: #333; background: #fff; }
.rte-body p { height: 24px; white-space: nowrap; }
.rte-body p + p { margin-top: 21px; }
.rte-body .p-form { margin: 26px 0 24px 3px; }
.rte-body .p-form + p { margin-top: 0; }
.chip-form { background: #d8a8a8; border: 2px solid #e06060; border-radius: 4px; padding: 2px 3px; color: #444; }

/* page layout builder */
.lay-tabs { height: 37px; display: flex; align-items: center; }
.lay-on { width: 76px; height: 37px; background: #23a6d8; color: #fff; font-size: 13px; display: flex; align-items: center; justify-content: center; flex: none; }
.lay-ic { width: 16px; height: 16px; fill: #0e86ad; margin-left: 33px; flex: none; }
.lay-ic:nth-child(2) { margin-left: 18px; }
.lay-bar { height: 31px; background: #2cabe3; display: flex; align-items: center; padding-left: 17px; gap: 16px; position: relative; }
.lay-gear { width: 15px; height: 15px; }
.lay-right { margin-left: 759px; display: flex; align-items: center; }
.lay-cols { width: 13px; height: 13px; fill: #fff; }
.lay-body { border-left: 1px solid #2cabe3; padding: 5px 0 0 5px; }
.panel { border-radius: 4px 0 0 4px; margin-bottom: 6px; }
.panel-head { height: 31px; background: #02a99c; color: #fff; display: flex; align-items: center; padding: 1px 0 0 17px; font-size: 13.300px; border-radius: 4px 0 0 0; }
.panel-x { width: 15px; height: 15px; margin-left: 11px; background: #b3e5e1; color: #02a99c; border-radius: 50%; font-size: 12px; line-height: 14px; text-align: center; flex: none; }
.panel-src { margin-left: 16px; font-family: Roboto, Inter, sans-serif; color: #e3f6f4; }
.panel-name { margin-left: 6px; font-weight: 700; font-family: Roboto, Inter, sans-serif; }
.panel-body { border: 1px solid #02a99c; border-top: 0; border-right: 0; border-radius: 0 0 0 4px; padding: 13px 0 8px 20px; }
.panel-h { font-size: 20.500px; line-height: 30px; font-weight: 600; color: #1f2025; }
.panel-h2 { margin-top: 8px; }
.blank { height: 30px; border: 1px dotted #c8c8c8; border-right: 0; border-radius: 4px 0 0 4px; padding-left: 4px; font-size: 10.800px; line-height: 18px; color: #bdbdbd; }
.rows { display: grid; grid-template-columns: 296.500px 1fr; grid-auto-rows: 43px; margin: 4px 0 0 8px; align-items: center; font-size: 14px; color: #333; }
.panel-h2 + .rows { margin-top: 4.500px; }
.rows dt { font-weight: 600; color: #27272a; }

/* taskbar */
.taskbar { position: absolute; left: 0; top: 1032px; width: 1915px; height: 20px; background: #eee; border-top: 2px solid #bbb; display: flex; align-items: flex-start; overflow: hidden; padding-left: 19px; }
.tk { width: 24px; height: 24px; flex: none; margin: 9px 20px 0 0; display: block; }
.tk-win { margin: 11px 13px 0 0; }
.tk-search { width: 218px; height: 40px; margin-top: 6px; flex: none; border: 1px solid #ddd; border-radius: 20px; background: #f8f8f8; display: flex; padding: 6px 0 0 13px; gap: 10px; font-size: 12px; color: #333; }
.tk-search-t { line-height: 16px; }
.tk-view { flex: none; width: 22px; height: 24px; margin: 10px 20px 0 15px; background: linear-gradient(#fafafa 60%, #888 60%); }
.tk-print { margin-right: 14px; }
.tk-active { width: 36px; height: 24px; margin: 3px 14px 0 0; background: #f8f8f8; border-radius: 4px; position: relative; flex: none; }
.tk-chrome { position: absolute; left: 7px; top: 7px; width: 24px; height: 24px; }
.tk-j { position: absolute; left: 19px; top: 2px; width: 16px; height: 16px; border-radius: 50%; background: #7a1fa2; color: #fff; font: 10px/16px "Open Sans", sans-serif; text-align: center; }
.tk-vs { margin-right: 25px; }
.tk-teams { width: 32px; height: 24px; margin: 4px 9px 0 0; position: relative; flex: none; }
.tk-dot { position: absolute; left: 0; top: 7px; width: 8px; height: 8px; background: #8d8ff0; border-radius: 50%; }
.tk-ok { position: absolute; left: 9px; top: 0; width: 14px; height: 16px; background: #12a012; border-radius: 50%; color: #fff; font: 9px/16px "Liberation Sans", sans-serif; text-align: center; }
.tk-snip { width: 16px; height: 20px; margin: 5px 27px 0 0; }

/* annotations */
.note-box { position: absolute; border: 4px solid #ed1c24; z-index: 5; pointer-events: none; }
.note-small { left: 71px; top: 791px; width: 293px; height: 50px; }
.note-large { left: 1015px; top: 288px; width: 955px; height: 788px; }
.note-arrow { position: absolute; left: 0; top: 0; width: 1971px; height: 1077px; z-index: 6; pointer-events: none; }
.note-line { stroke: #ed1c24; stroke-width: 5.500; fill: none; }
.note-head { fill: #ed1c24; }
```
